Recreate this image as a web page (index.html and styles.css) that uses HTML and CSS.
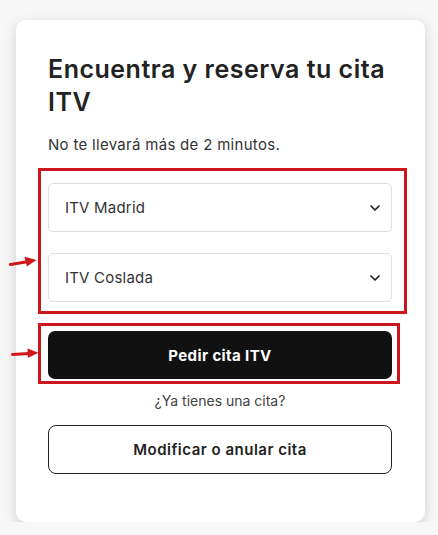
FILE: index.html
```html
<!DOCTYPE html>
<html lang="es">
<head>
<meta charset="utf-8">
<title>Reserva cita ITV</title>
<link rel="stylesheet" href="styles.css">
</head>
<body>
<div class="card">
  <h1 class="title">Encuentra y reserva tu cita ITV</h1>
  <p class="subtitle">No te llevará más de 2 minutos.</p>
  <div class="selects">
    <div class="select">
      <span>ITV Madrid</span>
      <svg class="chev" width="10" height="6" viewBox="0 0 10 6"><path d="M1 1 L5 5 L9 1" fill="none" stroke="#222" stroke-width="1.7" stroke-linecap="round" stroke-linejoin="round"/></svg>
    </div>
    <div class="select">
      <span>ITV Coslada</span>
      <svg class="chev" width="10" height="6" viewBox="0 0 10 6"><path d="M1 1 L5 5 L9 1" fill="none" stroke="#222" stroke-width="1.7" stroke-linecap="round" stroke-linejoin="round"/></svg>
    </div>
  </div>
  <button class="btn-primary">Pedir cita ITV</button>
  <p class="have">¿Ya tienes una cita?</p>
  <button class="btn-outline">Modificar o anular cita</button>

  <div class="mark mark-selects"></div>
  <div class="mark mark-button"></div>
  <svg class="arrow arrow-1" width="28" height="12" viewBox="0 0 28 12"><path d="M1.5 8.5 L18 5.8" stroke="#d0161d" stroke-width="3" stroke-linecap="round"/><path d="M15.5 0.8 L27.5 4 L17.8 10.6 Z" fill="#d0161d"/></svg>
  <svg class="arrow arrow-2" width="28" height="12" viewBox="0 0 28 12"><path d="M1.5 7.4 L18 6.6" stroke="#d0161d" stroke-width="3" stroke-linecap="round"/><path d="M16.5 1.5 L27.5 5.8 L16.8 11 Z" fill="#d0161d"/></svg>
</div>
</body>
</html>
```
FILE: styles.css
```css
html, body {
  margin: 0;
  background: #f7f7f7;
}
body {
  padding: 20px 0 0 16px;
  font-family: Inter, "Liberation Sans", sans-serif;
  color: #222;
}
.card {
  position: relative;
  width: 409px;
  box-sizing: border-box;
  padding: 33px 33px 48px 32px;
  background: #fff;
  border-radius: 10px;
  box-shadow: 0 4px 14px rgba(0, 0, 0, 0.16);
}
.title {
  margin: 0;
  font-size: 25px;
  line-height: 33px;
  font-weight: 600;
  letter-spacing: 0.5px;
  color: #222;
}
.subtitle {
  margin: 16px 0 0;
  font-size: 15px;
  line-height: 20px;
  letter-spacing: 0.3px;
  color: #333;
}
.selects {
  margin-top: 28px;
  display: flex;
  flex-direction: column;
  gap: 21px;
}
.select {
  height: 49px;
  box-sizing: border-box;
  border: 1px solid #dedede;
  border-radius: 5px;
  padding: 0 10px 0 16px;
  display: flex;
  align-items: center;
  justify-content: space-between;
  font-size: 15px;
  letter-spacing: 0.2px;
  color: #333;
}
.chev {
  display: block;
  margin-right: 1px;
}
.btn-primary,
.btn-outline {
  display: block;
  width: 100%;
  box-sizing: border-box;
  font-family: inherit;
  cursor: pointer;
}
.btn-primary {
  margin-top: 29px;
  height: 48px;
  border: 0;
  border-radius: 7px;
  background: #111;
  color: #fff;
  font-size: 15px;
  letter-spacing: 0.4px;
  font-weight: 700;
}
.have {
  margin: 12px 0 0;
  text-align: center;
  font-size: 14px;
  line-height: 20px;
  color: #444;
}
.btn-outline {
  margin-top: 14px;
  height: 49px;
  border: 1px solid #222;
  border-radius: 8px;
  background: #fff;
  color: #222;
  font-size: 15px;
  letter-spacing: 0.5px;
  font-weight: 600;
}
.mark {
  position: absolute;
  box-sizing: border-box;
  border: 3px solid #cc161d;
  pointer-events: none;
}
.mark-selects {
  left: 22px;
  top: 148px;
  width: 369px;
  height: 146px;
}
.mark-button {
  left: 22px;
  top: 303px;
  width: 362px;
  height: 61px;
}
.arrow {
  position: absolute;
  display: block;
}
.arrow-1 {
  left: -7px;
  top: 236px;
}
.arrow-2 {
  left: -5px;
  top: 327px;
}
```
